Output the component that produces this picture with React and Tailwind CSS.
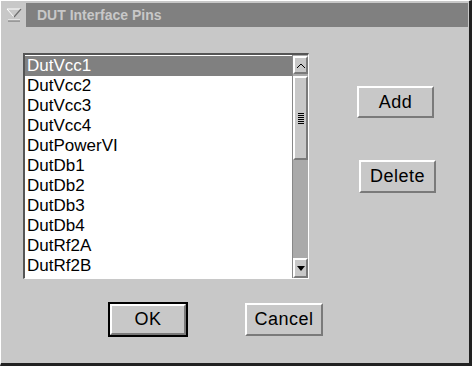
const pins = [
  'DutVcc1',
  'DutVcc2',
  'DutVcc3',
  'DutVcc4',
  'DutPowerVI',
  'DutDb1',
  'DutDb2',
  'DutDb3',
  'DutDb4',
  'DutRf2A',
  'DutRf2B',
]

const font = { fontFamily: '"Liberation Sans", Arial, sans-serif' }

const Bevel = ({ className = '', children }) => (
  <div className={`border-t-2 border-l-2 border-t-white border-l-white border-b-2 border-r-2 border-b-[#7a7a7a] border-r-[#7a7a7a] bg-[#c8c8c8] ${className}`}>
    {children}
  </div>
)

const MotifButton = ({ label, className = '' }) => (
  <button className={`flex items-center justify-center border-t-2 border-l-2 border-t-white border-l-white border-b-2 border-r-2 border-b-[#7a7a7a] border-r-[#7a7a7a] bg-[#c8c8c8] text-[18px] tracking-[0.5px] text-black ${className}`}>
    {label}
  </button>
)

export default function App() {
  const selected = 0

  return (
    <div
      style={font}
      className="w-[472px] h-[366px] bg-[#c8c8c8] border-t border-l border-t-white border-l-white border-r-[3px] border-b-[3px] border-r-[#222] border-b-[#222] flex flex-col overflow-hidden"
    >
      {/* title bar */}
      <div className="flex items-stretch h-[24px] mt-[2px]">
        <div className="w-[25px] flex items-center justify-center">
          <svg width="16" height="14" viewBox="0 0 16 14">
            <path d="M1 1 L15 1 L8 9 Z" fill="#c8c8c8" stroke="#ffffff" strokeWidth="1" />
            <path d="M15 1 L8 9" stroke="#6a6a6a" strokeWidth="1.2" />
            <line x1="2" y1="12" x2="14" y2="12" stroke="#ffffff" strokeWidth="1" />
            <line x1="2" y1="13" x2="14" y2="13" stroke="#6a6a6a" strokeWidth="1" />
          </svg>
        </div>
        <div className="flex-1 mr-[1px] bg-[#808080] flex items-center pl-[11px] text-[14px] font-semibold text-[#c8c8c8]">
          DUT Interface Pins
        </div>
      </div>

      {/* body */}
      <div className="flex mt-[26px]">
        {/* list box */}
        <div className="ml-[22px] w-[286px] h-[226px] border-t-2 border-l-2 border-t-[#555] border-l-[#555] border-b border-r border-b-white border-r-white flex bg-[#c8c8c8]">
          <div className="w-[267px] bg-white flex flex-col pt-[1px]">
            {pins.map((pin, i) => (
              <div
                key={pin}
                className={`h-[20px] leading-[20px] pl-[2px] text-[17px] ${i === selected ? 'bg-[#808080] text-white' : 'text-black'}`}
              >
                {pin}
              </div>
            ))}
          </div>
          {/* scrollbar */}
          <div className="w-[16px] bg-[#aaaaaa] flex flex-col border-l border-l-[#888]">
            <Bevel className="h-[18px] mt-[1px] flex items-center justify-center">
              <svg width="8" height="5" viewBox="0 0 8 5">
                <path d="M0 5 L4 1 L8 5" fill="none" stroke="#000" strokeWidth="1" />
              </svg>
            </Bevel>
            <Bevel className="h-[84px] mt-[2px] flex items-center justify-center">
              <div className="flex flex-col gap-[1px]">
                {[0, 1, 2, 3, 4, 5].map(n => (
                  <div key={n} className="w-[6px] h-[1px] bg-black" />
                ))}
              </div>
            </Bevel>
            <div className="flex-1" />
            <Bevel className="h-[20px] flex items-center justify-center">
              <svg width="8" height="5" viewBox="0 0 8 5">
                <path d="M0 0 L8 0 L4 5 Z" fill="#000" />
              </svg>
            </Bevel>
          </div>
        </div>

        {/* side buttons */}
        <div className="flex flex-col ml-[48px]">
          <MotifButton label="Add" className="w-[77px] h-[32px] mt-[33px]" />
          <MotifButton label="Delete" className="w-[77px] h-[33px] mt-[42px] ml-[2px]" />
        </div>
      </div>

      {/* bottom buttons */}
      <div className="flex mt-[23px]">
        <div className="ml-[107px] w-[80px] h-[35px] border-2 border-black flex">
          <MotifButton label="OK" className="flex-1" />
        </div>
        <MotifButton label="Cancel" className="ml-[57px] mt-[1px] w-[78px] h-[33px]" />
      </div>
    </div>
  )
}
